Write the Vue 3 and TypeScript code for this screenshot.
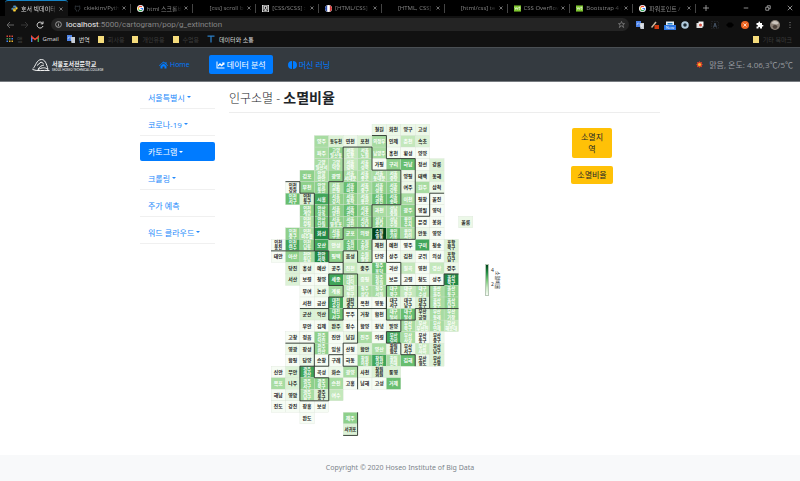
<script setup lang="ts">
interface Tab { title: string; icon: string }
interface Cell { x: number; y: number; lines: string[]; level: number }

const tabs: Tab[] = [
  { title: '호서 빅데이터', icon: 'python' },
  { title: 'ckiekim/Pyth', icon: 'github' },
  { title: 'html 스크롤바', icon: 'google' },
  { title: '[css] scroll b', icon: '' },
  { title: '[CSS/SCSS] :', icon: 'puzzle' },
  { title: '[HTML/CSS]', icon: 'flag' },
  { title: '[HTML, CSS]', icon: '' },
  { title: '[html/css] te', icon: '' },
  { title: 'CSS Overflow', icon: 'w3' },
  { title: 'Bootstrap 4 (', icon: 'w3' },
  { title: '파워포인트 /', icon: 'google' },
]

const sideMenu = [
  { label: '서울특별시', caret: true },
  { label: '코로나-19', caret: true },
  { label: '카토그램', caret: true, active: true },
  { label: '크롤링', caret: true },
  { label: '주가 예측', caret: false },
  { label: '워드 클라우드', caret: true },
]

const W = 50
const H = 40
const palette = ['#f6fcf4', '#ecf8e8', '#dcf2d6', '#c4e8bc', '#a8dca2', '#8ed08b', '#68be70', '#41a65a', '#218944', '#00441b']

// [row, first column, "name:level" list]; a slash splits a name over two lines
const segments: [number, number, string][] = [
  [0, 7, '철원:1 화천:1 양구:1 고성:1'],
  [1, 3, '양주:4 동두천:2 연천:1 포천:2 의정부:4 인제:1 춘천:3 속초:2'],
  [2, 3, '파주:4 고양/일산동:5 서울/도봉:3 서울/노원:4 남양주:4 홍천:0 횡성:0 양양:0'],
  [3, 3, '고양/일산서:4 고양/덕양:4 서울/강북:3 서울/성북:4 가평:0 구리:5 하남:6 정선:0 강릉:2'],
  [4, 2, '김포:5 안양/만안:4 광명:5 서울/서대문:4 서울/종로:4 서울/동대문:4 서울/중랑:4 양평:1 태백:1 동해:2'],
  [5, 1, '인천/강화:0 부천:5 안양/동안:5 서울/은평:4 서울/마포:6 서울/중구:4 서울/성동:5 서울/강동:5 여주:1 원주:4 삼척:1'],
  [6, 1, '인천/서구:6 인천/동구:2 시흥:7 서울/강서:5 서울/동작:5 서울/용산:4 서울/광진:6 서울/송파:6 이천:4 평창:0 울진:0'],
  [7, 2, '인천/계양:5 안산/상록:6 서울/양천:5 서울/관악:6 서울/서초:5 과천:4 성남/중원:4 광주:5 영월:0 영덕:0'],
  [8, 2, '인천/부평:4 안산/단원:6 서울/영등포:5 서울/금천:5 서울/강남:5 성남/분당:5 성남/수정:4 용인/수지:5 문경:0 봉화:0'],
  [8, 13, '울릉:1'],
  [9, 1, '인천/중구:5 인천/미추홀:4 화성:8 서울/구로:5 군포:5 의왕:5 수원/영통:9 용인/기흥:6 용인/처인:4 안동:1 영양:0'],
  [10, 0, '인천/옹진:0 인천/연수:7 인천/남동:5 오산:7 안성:3 수원/권선:6 수원/장안:5 제천:1 예천:0 영주:0 구미:7 청송:0 포항/북구:2'],
  [11, 0, '태안:0 아산:5 천안/동남:4 천안/서북:8 평택:5 음성:2 수원/팔달:4 단양:0 상주:0 김천:1 군위:0 의성:0 포항/남구:2'],
  [12, 1, '당진:2 홍성:1 예산:0 공주:1 진천:3 충주:2 청주/흥덕:6 괴산:0 칠곡:3 영천:0 경산:3 경주:1'],
  [13, 1, '서산:2 보령:0 청양:0 세종:7 대전/대덕:4 증평:3 청주/청원:5 보은:0 고령:0 청도:0 성주:0 울산/북구:8'],
  [14, 2, '부여:0 논산:1 계룡:4 대전/동구:3 청주/상당:4 청주/서원:4 대구/북구:5 대구/중구:3 대구/수성:4 울산/울주:4 울산/동구:5'],
  [15, 2, '서천:0 금산:0 대전/유성:7 대전/중구:2 옥천:0 영동:0 대구/서구:1 대구/남구:1 대구/동구:2 울산/중구:4 울산/남구:5'],
  [16, 2, '군산:2 익산:2 대전/서구:6 무주:0 거창:1 합천:0 대구/달서:5 대구/달성:6 부산/금정:2 부산/동래:4 부산/기장:4'],
  [17, 2, '부안:0 김제:0 완주:2 장수:0 함양:0 창녕:0 밀양:1 부산/북구:4 부산/부산진:3 부산/연제:4 부산/해운대:3'],
  [18, 1, '고창:0 정읍:0 전주/덕진:5 진안:0 남원:1 진주:4 의령:0 부산/강서:7 부산/사상:4 부산/동구:0 부산/중구:1'],
  [19, 1, '영광:1 장성:1 전주/완산:5 임실:0 산청:0 함안:2 양산:4 창원/합포:1 부산/서구:1 부산/사하:3 부산/남구:2'],
  [20, 1, '함평:0 담양:1 순창:0 구례:0 하동:0 창원/의창:5 창원/성산:7 창원/진해:4 김해:6 부산/영도:1 부산/수영:2'],
  [21, 0, '신안:0 무안:2 광주/광산:7 곡성:0 화순:1 광양:4 사천:1 창원/회원:2 통영:2'],
  [22, 0, '목포:4 나주:2 광주/서구:5 광주/북구:5 순천:4 고흥:0 남해:0 고성:0 거제:6'],
  [23, 0, '해남:0 영암:1 광주/남구:4 광주/동구:2 여수:3'],
  [24, 0, '진도:0 강진:0 장흥:0 보성:0'],
  [25, 2, '완도:0'],
  [25, 5, '제주:5'],
  [26, 5, '서귀포:2'],
]

const cells: Cell[] = segments.flatMap(([row, col, list]) =>
  list.split(' ').map((entry, i) => {
    const [name, level] = entry.split(':')
    return { x: (col + i) * W, y: row * H, lines: name.split('/'), level: Number(level) }
  }),
)

// Names that stay dark on a mid-green cell, and names set in white
const isLight = (c: Cell): boolean => c.level > 2

// Province outlines as "row,column" grid corners
const borders = [
  '5,1 5,2 6,2 6,3 11,3 11,0',
  '5,4 5,5 2,5 2,7 4,7 4,9 7,9 7,7 9,7 9,5 10,5 10,4 5,4',
  '1,7 1,8 3,8 3,10 10,10 10,7 12,7 12,6 11,6 11,5 12,5 12,4 11,4 11,3',
  '8,10 8,11 6,11 6,12',
  '12,5 13,5 13,4 14,4 14,5 15,5 15,4 16,4 16,2',
  '16,4 17,4 17,5 16,5 16,6 19,6 19,5 20,5 20,4 21,4 21,3 19,3 19,1',
  '13,5 13,6 16,6',
  '21,2 21,3 22,3 22,4 24,4 24,2 21,2',
  '20,5 21,5 21,6 23,6',
  '10,8 12,8 12,9 14,9 14,8 16,8 16,6',
  '14,9 14,12 13,12 13,13',
  '15,8 17,8 17,10 16,10 16,11 14,11',
  '17,9 18,9 18,8 19,8 19,9 20,9 20,10 21,10',
  '16,11 16,13',
  '27,5 27,6 25,6',
].map((path) =>
  path.split(' ').map((p) => {
    const [r, c] = p.split(',').map(Number)
    return `${c * W},${r * H}`
  }).join(' '),
)
</script>

<template>
  <div class="screen">
    <header class="browser">
      <div class="tabstrip">
        <div class="tabs">
          <div v-for="(t, i) in tabs" :key="i" class="tab" :class="{ current: i === 0 }">
            <span class="favicon">
              <svg v-if="t.icon === 'python'" viewBox="0 0 16 16"><path d="M8 1c-3 0-3 1-3 3v1h4v1H3C1 6 1 8 1 9s1 3 2 3h1v-2c0-1 1-2 2-2h4c1 0 2-1 2-2V3c0-1-1-2-4-2" fill="#4b8bbe" /><path d="M8 15c3 0 3-1 3-3v-1H7v-1h6c2 0 2-2 2-3s-1-3-2-3h-1v2c0 1-1 2-2 2H7c-2 0-2 1-2 2v3c0 1 0 2 3 2" fill="#ffd43b" /></svg>
              <svg v-else-if="t.icon === 'github'" viewBox="0 0 16 16"><path d="M6 15v-3C2 11 2 8 3 5V2l3 1h4l3-1v3c1 3 1 6-3 7v3" fill="none" stroke="#343a40" stroke-width="2" /></svg>
              <svg v-else-if="t.icon === 'google'" viewBox="0 0 16 16"><circle cx="8" cy="8" r="8" fill="#fff" /><g fill="none" stroke-width="2.4"><path d="M11.5 4.5A5 5 0 0 0 3.6 5.8" stroke="#ea4335" /><path d="M3.6 5.8a5 5 0 0 0 0 4.4" stroke="#fbbc05" /><path d="M3.6 10.2a5 5 0 0 0 7.9 1.3" stroke="#34a853" /><path d="M11.5 11.5A5 5 0 0 0 13 8H8" stroke="#4285f4" /></g></svg>
              <svg v-else-if="t.icon === 'puzzle'" viewBox="0 0 16 16"><path d="M0 0h16v16H0z" fill="#ddd" /><path d="M3 2h10v12H3z" fill="#fff" stroke="#111" stroke-width="1.5" /><circle cx="8" cy="6" r="2" fill="#111" /><path d="M4 14c0-7 8-7 8 0" fill="none" stroke="#111" stroke-width="2" /></svg>
              <svg v-else-if="t.icon === 'flag'" viewBox="0 0 16 16"><circle cx="8" cy="8" r="8" fill="#fff" /><path d="M5 .6a8 8 0 0 0 0 14.8z" fill="#2849a8" /><path d="M11 .6a8 8 0 0 1 0 14.8z" fill="#d63a3a" /></svg>
              <svg v-else-if="t.icon === 'w3'" viewBox="0 0 16 16"><path d="M0 1h16v14H0z" fill="#7dc52e" /><path d="M2 5l2 5 2-4 2 4 2-5M11 5h3l-2 2c3 0 2 4-1 3" fill="none" stroke="#fff" stroke-width="1.4" /></svg>
            </span>
            <span class="tab-title">{{ t.title }}</span>
            <button class="close" type="button" aria-label="탭 닫기"><svg viewBox="0 0 8 8"><path d="M1 1l6 6M7 1L1 7" /></svg></button>
          </div>
        </div>
        <button class="plus" type="button" aria-label="새 탭"><svg viewBox="0 0 8 8"><path d="M4 0v8M0 4h8" /></svg></button>
        <div class="window-buttons">
          <button type="button" aria-label="최소화"><svg viewBox="0 0 8 8"><path d="M1 4h6" /></svg></button>
          <button type="button" aria-label="이전 크기로"><svg viewBox="0 0 8 8"><path d="M1 3h4v4H1zM3 3V1h4v4H5" /></svg></button>
          <button type="button" aria-label="닫기"><svg viewBox="0 0 8 8"><path d="M1 1l6 6M7 1L1 7" /></svg></button>
        </div>
      </div>

      <div class="toolbar">
        <button class="tool dim" type="button" aria-label="뒤로"><svg viewBox="0 0 8 8"><path d="M8 4H1M4 1L1 4l3 3" /></svg></button>
        <button class="tool dim darker" type="button" aria-label="앞으로"><svg viewBox="0 0 8 8"><path d="M0 4h7M4 1l3 3-3 3" /></svg></button>
        <button class="tool" type="button" aria-label="새로고침"><svg viewBox="0 0 8 8"><path d="M6.5 2.2A3 3 0 1 0 7 5M7 .5v2.3H4.7" /></svg></button>
        <div class="address">
          <svg class="info" viewBox="0 0 8 8"><circle cx="4" cy="4" r="3.3" /><path d="M4 3.5v2.5M4 2v.8" /></svg>
          <a class="url" href="#"><b>localhost</b>:5000/cartogram/pop/g_extinction</a>
          <svg class="star" viewBox="0 0 16 16"><path d="M8 1l2 5h5l-4 3 2 6-5-4-5 4 2-6-4-3h5z" /></svg>
        </div>
        <div class="extensions">
          <svg viewBox="0 0 16 16"><path d="M0 0h10v12H0z" fill="#4d83e8" /><path d="M7 4h9v12H9z" fill="#c7cdd6" /><path d="M3 8a2 2 0 1 1 3-3M9 8h6M12 7c0 3-2 5-3 6M10 9c1 2 3 4 4 4" stroke="#fff" fill="none" /></svg>
          <svg viewBox="0 0 16 16"><path d="M1 13L10 2" stroke="#c9b9a0" stroke-width="3" /><path d="M7 8h9v8H7z" fill="#d33b10" /></svg>
          <span class="ext-new"><svg viewBox="0 0 16 16"><path d="M0 1h16v14H0z" fill="#e4edf5" /><path d="M3 5h10M3 8h10" stroke="#277ec1" stroke-width="2" /></svg><em>New</em></span>
          <svg viewBox="0 0 16 16"><circle cx="8" cy="8" r="5.5" fill="#1a2730" stroke="#b2cbdc" stroke-width="4" /></svg>
          <svg viewBox="0 0 16 16"><path d="M1 4h12v10H1z" fill="#ddd" /><path d="M5 1h10v10H5z" fill="#f7f7f7" /><circle cx="9" cy="8" r="3" fill="#d34f41" /></svg>
          <svg viewBox="0 0 16 16"><path d="M1 1h14v14H1z" fill="none" stroke="#30353d" stroke-dasharray="3 2" /><path d="M5 13L8 4l3 9M6 10h4" fill="none" stroke="#506178" stroke-width="1.5" /></svg>
          <svg viewBox="0 0 16 16"><path d="M0 8l5-5h6l5 5-5 5H5z" fill="#000" /></svg>
          <svg viewBox="0 0 16 16"><circle cx="8" cy="8" r="8" fill="#ed6623" /><path d="M5 5l6 6M11 5l-6 6" stroke="#ffd8c0" stroke-width="2" /></svg>
          <svg viewBox="0 0 16 16"><path d="M1 4h4c-1-4 4-4 3 0h4v4c4-1 4 4 0 3v4H8c1-4-4-4-3 0H1v-4c4 1 4-4 0-3z" fill="#fff" /></svg>
          <svg class="avatar" viewBox="0 0 16 16"><circle cx="8" cy="8" r="8" fill="#8c8076" /><path d="M2 5c4-5 9-4 12 0l-3 2-6-1z" fill="#ccc5bd" /><path d="M4 10c3-3 6-2 8 0l-2 4H6z" fill="#4c4039" /></svg>
          <svg viewBox="0 0 16 16"><path d="M7 2h2v2H7zM7 7h2v2H7zM7 12h2v2H7z" fill="#888" /></svg>
        </div>
      </div>

      <nav class="bookmarks" aria-label="북마크">
        <a class="faint" href="#"><svg viewBox="0 0 16 16"><path d="M1 1h3v3H1zM6 1h3v3H6zM11 1h3v3h-3z" fill="#d9483b" /><path d="M1 6h3v3H1zM6 6h3v3H6z" fill="#46a35a" /><path d="M11 6h3v3h-3zM1 11h3v3H1z" fill="#4285f4" /><path d="M6 11h3v3H6zM11 11h3v3h-3z" fill="#e9b42e" /></svg>앱</a>
        <a href="#"><svg viewBox="0 0 16 16"><path d="M1 14V3l7 6 7-6v11" fill="none" stroke="#ea4335" stroke-width="3" /><path d="M1 5v9" stroke="#4285f4" stroke-width="3" /><path d="M15 5v9" stroke="#34a853" stroke-width="3" /></svg>Gmail</a>
        <a href="#"><svg viewBox="0 0 16 16"><path d="M0 0h10v12H0z" fill="#4d83e8" /><path d="M7 4h9v12H9z" fill="#c7cdd6" /><path d="M3 8a2 2 0 1 1 3-3" stroke="#fff" fill="none" /></svg>번역</a>
        <a class="faint" href="#"><i class="folder"></i>회사용</a>
        <a class="faint" href="#"><i class="folder"></i>개인유용</a>
        <a class="faint" href="#"><i class="folder"></i>수업용</a>
        <a href="#"><svg viewBox="0 0 16 16"><path d="M1 2h14M8 2v13" fill="none" stroke="#2b7fc5" stroke-width="2.5" /></svg>데이터와 소통</a>
        <a class="faint other" href="#"><i class="folder"></i>기타 북마크</a>
      </nav>
    </header>

    <header class="navbar">
      <a class="brand" href="#" aria-label="서울호서전문학교">
        <svg class="mark" viewBox="0 0 36 28"><path d="M2 21C7 17 9 3 19 3c7 0 10 8 13 20-6-5-12-4-20 0 3-6 7-8 12-9M1 23c9 4 21 1 34 2M10 15l8-7 5 3" fill="none" stroke="#f4f5f5" stroke-width="2" /></svg>
        <span class="brand-text"><strong>서울호서전문학교</strong><small>SEOUL HOSEO TECHNICAL COLLEGE</small></span>
      </a>
      <nav class="main-nav">
        <a class="home" href="#"><svg viewBox="0 0 18 16"><path d="M9 1L0 9l1 1 8-7 8 7 1-1-3-3V2h-2v2zM3 10v5h4v-4h4v4h4v-5L9 5z" /></svg>Home</a>
        <a class="active" href="#"><svg viewBox="0 0 18 16"><path d="M1 1h2v12h14v2H1z" /><path d="M4 11V8l4-4 3 3 2-2-1-2h5v5l-1-1-5 4-3-3z" /></svg>데이터 분석</a>
        <a href="#"><svg viewBox="0 0 18 16"><path d="M8 0v16C3 16 0 13 0 8s3-8 8-8M10 0c5 0 8 3 8 8s-3 8-8 8z" /></svg>머신 러닝</a>
      </nav>
      <p class="weather">
        <svg viewBox="0 0 16 16"><path d="M8 0l2 3 4-1-1 4 3 2-3 2 1 4-4-1-2 3-2-3-4 1 1-4-3-2 3-2-1-4 4 1z" fill="#d8432b" /><circle cx="8" cy="8" r="3.5" fill="#ffb52a" /></svg>
        맑음, 온도: 4.06,3℃/5℃
      </p>
    </header>

    <div class="container">
      <nav class="sidebar">
        <a v-for="m in sideMenu" :key="m.label" href="#" :class="{ active: m.active }">{{ m.label }}<i v-if="m.caret" class="caret"></i></a>
      </nav>

      <main class="content">
        <h1>인구소멸 - <strong>소멸비율</strong></h1>
        <div class="board">
          <figure>
            <svg class="map" viewBox="0 0 700 1082" role="img" aria-label="소멸비율">
              <g v-for="(c, i) in cells" :key="i">
                <rect :x="c.x" :y="c.y" :width="W" :height="H" :fill="palette[c.level]" />
                <text
                  v-for="(line, n) in c.lines"
                  :key="n"
                  :x="c.x + 25"
                  :y="c.y + (c.lines.length === 1 ? 26 : 17 + n * 18)"
                  :class="{ light: isLight(c), small: c.lines.length > 1 || line.length > 2 }"
                >{{ line }}</text>
              </g>
              <polyline v-for="(b, i) in borders" :key="i" :points="b" />
            </svg>
            <div class="legend">
              <div class="scale"></div>
              <div class="ticks"><span>4</span><span>2</span></div>
              <div class="legend-title">소멸비율</div>
            </div>
          </figure>
          <div class="actions">
            <button class="narrow" type="button">소멸지역</button>
            <button type="button">소멸비율</button>
          </div>
        </div>
      </main>
    </div>

    <footer class="footer">Copyright © 2020 Hoseo Institute of Big Data</footer>
  </div>
</template>

<style>
body { margin: 0; }
</style>

<style scoped>
.screen {
  display: flex;
  flex-direction: column;
  min-height: 100vh;
  background: #fff;
  color: #212529;
  font-family: "Open Sans", "Noto Sans CJK KR", sans-serif;
  font-size: 8px;
}
* { box-sizing: border-box; }
a { text-decoration: none; color: inherit; }
button { border: 0; padding: 0; background: none; font: inherit; color: inherit; }
svg { display: block; flex: none; }

.browser { background: #111; color: #ddd; font-size: 6px; }
.tabstrip { display: flex; align-items: center; height: 16px; padding-left: 5px; background: #000; }
.tabs { display: flex; flex: 1; min-width: 0; }
.tab { display: flex; flex: 1 1 0; align-items: center; gap: 2px; min-width: 0; height: 16px; padding: 0 5px 0 6px; position: relative; color: #858585; }
.tab::after { content: ""; position: absolute; right: 0; top: 4px; height: 9px; border-right: 1px solid #444; }
.tab.current { background: #111; border-top: 1px solid #1683c4; border-radius: 3px 3px 0 0; color: #ddd; }
.tab.current::after { display: none; }
.favicon { flex: none; width: 8px; }
.favicon svg { width: 7px; height: 7px; }
.tab-title { flex: 1; overflow: hidden; white-space: nowrap; mask-image: linear-gradient(to right, #000 75%, transparent); }
.close svg { width: 4px; height: 4px; stroke: #ddd; }
.plus { width: 20px; padding: 0 7px; }
.plus svg { width: 6px; height: 6px; stroke: #bbb; }
.window-buttons { display: flex; gap: 16px; padding: 0 7px 0 27px; }
.window-buttons svg { width: 6px; height: 6px; fill: none; stroke: #bbb; }

.toolbar { display: flex; align-items: center; height: 17px; padding: 0 6px; }
.tool { width: 15px; padding-right: 7px; }
.tool svg { width: 8px; height: 8px; fill: none; stroke: #ddd; }
.dim svg { stroke: #666; }
.darker svg { stroke: #383838; }
.address { display: flex; flex: 1; align-items: center; gap: 4px; height: 13px; padding: 0 4px; border-radius: 7px; background: #242424; }
.address svg { width: 7px; height: 7px; fill: none; stroke: #aaa; }
.address .star { stroke: #777; stroke-width: 2px; }
.url { flex: 1; color: #858585; font-family: Roboto, sans-serif; font-size: 8px; line-height: 12px; }
.url b { color: #eee; font-weight: 400; }
.extensions { display: flex; align-items: center; gap: 7px; padding-left: 7px; }
.extensions svg { width: 8px; height: 8px; }
.extensions .avatar { width: 10px; height: 10px; margin: 0 -1px; }
.ext-new { position: relative; }
.ext-new em { position: absolute; left: -2px; top: 4px; width: 12px; background: #2b76e5; color: #fff; font-size: 4px; font-style: normal; line-height: 5px; text-align: center; }

.bookmarks { display: flex; align-items: center; gap: 8px; height: 14px; padding: 0 8px 2px 6px; }
.bookmarks a { display: flex; align-items: center; gap: 4px; white-space: nowrap; }
.bookmarks a:first-child { gap: 3px; }
.bookmarks svg { width: 8px; height: 8px; }
.bookmarks .faint { color: #3d3d3d; }
.bookmarks .other { margin-left: auto; }
.folder { width: 6px; height: 7px; background: #f5dc7c; }

.navbar { display: flex; align-items: center; height: 35px; padding: 0 7px 0 32px; border-top: 1px solid #4a4f54; border-bottom: 1px solid #777b80; background: #343a40; }
.brand { display: flex; align-items: center; width: 120px; color: #f4f5f5; }
.mark { width: 18px; height: 14px; }
.brand-text { display: flex; flex-direction: column; gap: 1px; padding: 3px 0 0 2px; white-space: nowrap; }
.brand-text strong { font-size: 6px; line-height: 7px; }
.brand-text small { font-family: Lato, sans-serif; font-size: 3px; line-height: 3px; }
.main-nav { display: flex; gap: 8px; color: #007bff; }
.main-nav a { display: flex; align-items: center; gap: 2px; height: 19px; padding: 0 7px; border-radius: 2px; white-space: nowrap; }
.main-nav .home { margin-right: 4px; font-size: 7px; }
.main-nav svg { width: 9px; height: 8px; fill: currentColor; }
.main-nav .active { background: #007bff; color: #fff; }
.weather { display: flex; align-items: center; gap: 6px; margin: 0 0 0 auto; color: #9a9da0; white-space: nowrap; }
.weather svg { width: 7px; height: 7px; }

.container { display: grid; grid-template-columns: 75px minmax(0, 1fr); gap: 14px; width: 65%; margin: 0 auto; padding-bottom: 19px; }
.sidebar { display: flex; flex-direction: column; gap: 4px; padding-top: 4px; }
.sidebar a { display: flex; align-items: center; height: 23px; padding: 0 8px; border-bottom: 1px solid #f0f0f0; color: #2489fb; }
.sidebar .active { height: 19px; margin: 2px 0; border: 0; border-radius: 2px; background: #007bff; color: #fff; }
.caret { margin-left: 2px; border: 2px solid transparent; border-top-color: currentColor; border-bottom: 0; }

.content h1 { margin: 0; height: 31px; border-bottom: 1px solid #ededed; font-size: 12px; font-weight: 300; line-height: 31px; }
.content h1 strong { font-size: 14px; font-weight: 700; }
.board { display: grid; grid-template-columns: minmax(0, 1fr) 42px; padding: 11px 47px 0 42px; }
figure { display: flex; align-items: center; gap: 12px; margin: 0; }
.map { width: 202px; height: 312px; }
.map rect { stroke: #d5dfd2; stroke-width: 1px; }
.map text { fill: #222; font-family: "Liberation Sans", "Noto Sans CJK KR", sans-serif; font-size: 17px; font-weight: 700; text-anchor: middle; }
.map .light { fill: #fff; }
.map .small { font-size: 15px; }
.map polyline { fill: none; stroke: #202a22; stroke-width: 3px; }
.legend { display: flex; align-items: center; font-size: 5px; line-height: 5px; }
.scale { width: 4px; height: 32px; border: 1px solid #b7c8b7; background: linear-gradient(#00441b, #238b45 25%, #74c476 50%, #c7e9c0 75%, #f7fcf5); }
.ticks { display: flex; flex-direction: column; gap: 9px; padding: 0 1px 6px 2px; }
.legend-title { writing-mode: vertical-rl; text-orientation: sideways; }
.actions { display: flex; flex-direction: column; align-items: center; gap: 8px; padding-top: 4px; }
.actions button { padding: 3px 6px; border-radius: 2px; background: #ffc107; line-height: 12px; white-space: nowrap; }
.actions .narrow { width: 40px; padding: 3px 7px; white-space: normal; word-break: break-all; }

.footer { flex: 1; padding-top: 7px; background: #f8f9fa; color: #7c848b; font-family: "Noto Sans", sans-serif; font-size: 7px; line-height: 12px; text-align: center; }
</style>
